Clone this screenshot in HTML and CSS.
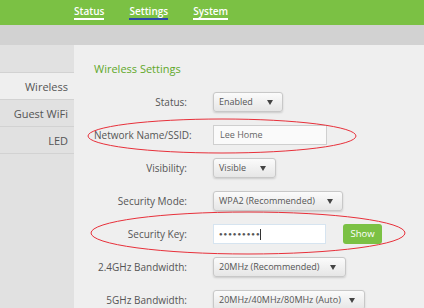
FILE: index.html
```html
<!DOCTYPE html>
<html lang="en">
<head>
	<meta charset="UTF-8">
	<title>Router | Wireless Settings</title>
	<link rel="stylesheet" href="styles.css">
</head>
<body>

	<!-- top navigation -->
	<div id="topbar">
		<div class="nav-link">Status</div>
		<div class="nav-link active-nav">Settings</div>
		<div class="nav-link">System</div>
	</div>
	<div id="subbar"></div>

	<div class="main">
		<div class="sidebar">
			<div class="side-item side-empty"></div>
			<div class="side-item side-active">Wireless</div>
			<div class="side-item">Guest WiFi</div>
			<div class="side-item">LED</div>
		</div>

		<div class="content">
			<div class="section-title">Wireless Settings</div>

			<div class="form-grid">
				<div class="label">Status:</div>
				<div class="field"><div class="select w-69">Enabled<span class="arrow"></span></div></div>

				<div class="label">Network Name/SSID:</div>
				<div class="field"><div class="text-input">Lee Home</div></div>

				<div class="label">Visibility:</div>
				<div class="field"><div class="select w-62">Visible<span class="arrow"></span></div></div>

				<div class="label">Security Mode:</div>
				<div class="field"><div class="select w-129">WPA2 (Recommended)<span class="arrow"></span></div></div>

				<div class="label">Security Key:</div>
				<div class="field">
					<div class="text-input key-input">&#9679;&#9679;&#9679;&#9679;&#9679;&#9679;&#9679;&#9679;&#9679;<span class="caret"></span></div>
					<div class="show-button">Show</div>
				</div>

				<div class="label">2.4GHz Bandwidth:</div>
				<div class="field"><div class="select w-132">20MHz (Recommended)<span class="arrow"></span></div></div>

				<div class="label">5GHz Bandwidth:</div>
				<div class="field"><div class="select w-151">20MHz/40MHz/80MHz (Auto)<span class="arrow"></span></div></div>
			</div>
		</div>
	</div>

	<!-- red annotation rings -->
	<svg class="marks" width="424" height="308" viewBox="0 0 424 308">
		<ellipse cx="222" cy="136" rx="134" ry="17" fill="none" stroke="#e8303a" stroke-width="1"/>
		<ellipse cx="248" cy="233" rx="157" ry="21" fill="none" stroke="#e8303a" stroke-width="1"/>
	</svg>

</body>
</html>
```

FILE: styles.css
```css
body {
	margin: 0;
	background: #efefef;
	font-family: "Open Sans", "Liberation Sans", sans-serif;
	color: #555;
	position: relative;
	overflow: hidden;
	height: 308px;
}

#topbar {
	height: 25px;
	background: #7bc144;
	display: flex;
	padding-left: 74px;
	gap: 25px;
}

.nav-link {
	color: #fff;
	font-size: 10px;
	font-weight: 600;
	line-height: 14px;
	padding-top: 4px;
	height: 14px;
	border-bottom: 2px solid #fff;
}

.active-nav {
	border-bottom-color: #2a49a8;
}

#subbar {
	height: 20px;
	background: #d2d2d2;
}

.main {
	display: flex;
}

.sidebar {
	width: 74px;
	background: #e1e1e1;
	height: 263px;
}

.side-item {
	height: 27px;
	border-bottom: 1px solid #d2d2d2;
	text-align: right;
	padding-right: 6px;
	font-size: 11px;
	line-height: 28px;
	color: #555;
	box-sizing: border-box;
}

.side-empty {
	height: 28px;
}

.side-active {
	background: #efefef;
}

.content {
	flex: 1;
	padding: 16px 0 0 20px;
}

.section-title {
	color: #5fa82a;
	font-size: 11px;
	line-height: 16px;
	margin-bottom: 15px;
}

.form-grid {
	display: grid;
	grid-template-columns: 93px auto;
	column-gap: 26px;
	row-gap: 13px;
	align-items: center;
}

.label {
	text-align: right;
	font-size: 10px;
	white-space: nowrap;
}

.field {
	display: flex;
	align-items: center;
	height: 20px;
}

.select {
	position: relative;
	height: 18px;
	line-height: 18px;
	font-size: 9px;
	padding-left: 5px;
	color: #555;
	border: 1px solid #c8c8c8;
	border-radius: 3px;
	background: linear-gradient(#fbfbfb, #e6e6e6);
	box-shadow: 0 1px 2px rgba(0,0,0,0.15);
}

.arrow {
	position: absolute;
	right: 9px;
	top: 7px;
	width: 0;
	height: 0;
	border-left: 3px solid transparent;
	border-right: 3px solid transparent;
	border-top: 5px solid #444;
}

.w-69 { width: 63px; }
.w-62 { width: 56px; }
.w-129 { width: 123px; }
.w-132 { width: 126px; }
.w-151 { width: 145px; }

.text-input {
	width: 106px;
	height: 18px;
	line-height: 18px;
	font-size: 9px;
	padding-left: 6px;
	color: #666;
	background: #fafafa;
	border: 1px solid #cfcfcf;
}

.key-input {
	background: #fff;
	border-color: #d6e4f0;
	font-size: 6px;
	color: #555;
	letter-spacing: 1px;
	padding-left: 5px;
}

.caret {
	display: inline-block;
	width: 1px;
	height: 11px;
	background: #333;
	vertical-align: middle;
	margin-left: -1px;
}

.show-button {
	margin-left: 17px;
	width: 39px;
	height: 20px;
	line-height: 20px;
	text-align: center;
	font-size: 9.5px;
	color: #fff;
	background: #7bc144;
	border-radius: 3px;
}

.marks {
	position: absolute;
	left: 0;
	top: 0;
	pointer-events: none;
}
```
